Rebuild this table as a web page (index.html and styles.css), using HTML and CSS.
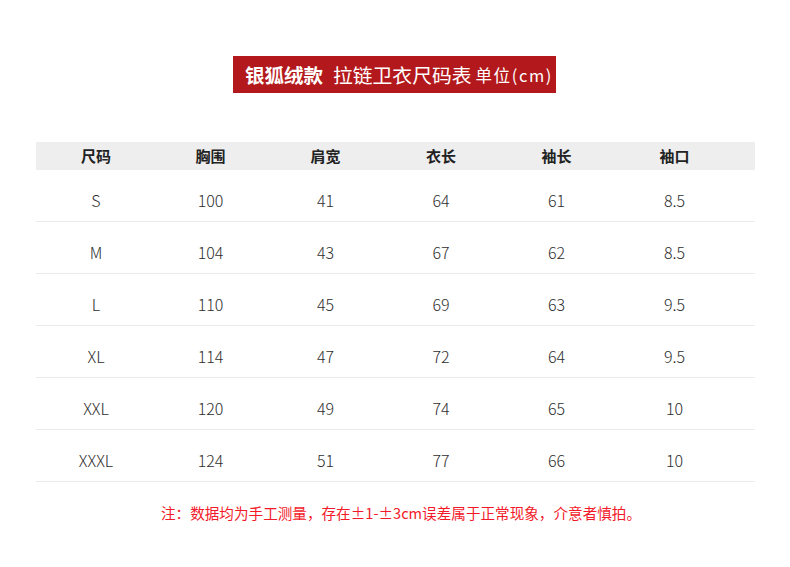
FILE: index.html
```html
<!DOCTYPE html>
<html lang="zh">
<head>
<meta charset="utf-8">
<link rel="stylesheet" href="styles.css">
</head>
<body>
<div class="page">
  <div class="title-wrap">
    <div class="title"><span class="t-bold">银狐绒款</span><span class="t-main">拉链卫衣尺码表</span><span class="t-unit">单位(cm)</span></div>
  </div>
  <div class="table">
    <div class="row head">
      <div class="cell">尺码</div><div class="cell">胸围</div><div class="cell">肩宽</div><div class="cell">衣长</div><div class="cell">袖长</div><div class="cell">袖口</div>
    </div>
    <div class="row"><div class="cell">S</div><div class="cell">100</div><div class="cell">41</div><div class="cell">64</div><div class="cell">61</div><div class="cell">8.5</div></div>
    <div class="row"><div class="cell">M</div><div class="cell">104</div><div class="cell">43</div><div class="cell">67</div><div class="cell">62</div><div class="cell">8.5</div></div>
    <div class="row"><div class="cell">L</div><div class="cell">110</div><div class="cell">45</div><div class="cell">69</div><div class="cell">63</div><div class="cell">9.5</div></div>
    <div class="row"><div class="cell">XL</div><div class="cell">114</div><div class="cell">47</div><div class="cell">72</div><div class="cell">64</div><div class="cell">9.5</div></div>
    <div class="row"><div class="cell">XXL</div><div class="cell">120</div><div class="cell">49</div><div class="cell">74</div><div class="cell">65</div><div class="cell">10</div></div>
    <div class="row"><div class="cell">XXXL</div><div class="cell">124</div><div class="cell">51</div><div class="cell">77</div><div class="cell">66</div><div class="cell">10</div></div>
  </div>
  <p class="note">注：数据均为手工测量，存在±1-±3cm误差属于正常现象，介意者慎拍。</p>
</div>
</body>
</html>
```

FILE: styles.css
```css
html, body {
  margin: 0;
  padding: 0;
  background: #ffffff;
}
body {
  font-family: "Noto Sans CJK SC", "Noto Sans", sans-serif;
  color: #333333;
}
.page {
  width: 790px;
  height: 567px;
  padding-top: 56px;
  box-sizing: border-box;
}
.title-wrap {
  display: flex;
  justify-content: center;
}
.title {
  background: #b3191c;
  color: #ffffff;
  height: 37px;
  width: 323px;
  box-sizing: border-box;
  padding-left: 12px;
  display: flex;
  align-items: center;
  margin-left: -1px;
}
.t-bold {
  font-size: 19.5px;
  font-weight: 700;
  line-height: 1;
  margin-right: 10px;
}
.t-main {
  font-size: 19.8px;
  font-weight: 400;
  line-height: 1;
  margin-right: 4px;
}
.t-unit {
  font-size: 16.5px;
  font-weight: 400;
  line-height: 1;
  letter-spacing: 1.6px;
  margin-top: 2px;
}
.table {
  margin: 49px 35px 0 36px;
}
.row {
  display: grid;
  grid-template-columns: 2px 116px 113px 117px 114px 117px 119px 1fr;
  height: 52px;
  border-bottom: 1px solid #ebebeb;
  box-sizing: border-box;
  align-items: center;
  padding-top: 9px;
  font-size: 16px;
  font-weight: 300;
  color: #2e2e2e;
}
.row::before {
  content: "";
}
.row.head {
  height: 28px;
  background: #eeeeee;
  border-bottom: none;
  padding-top: 0;
  font-size: 15px;
  font-weight: 700;
  color: #222222;
}
.cell {
  text-align: center;
  line-height: 20px;
}
.note {
  margin: 22px 0 0;
  text-align: center;
  font-size: 14.6px;
  line-height: 18px;
  color: #f21a2a;
  padding-left: 12px;
}
```
